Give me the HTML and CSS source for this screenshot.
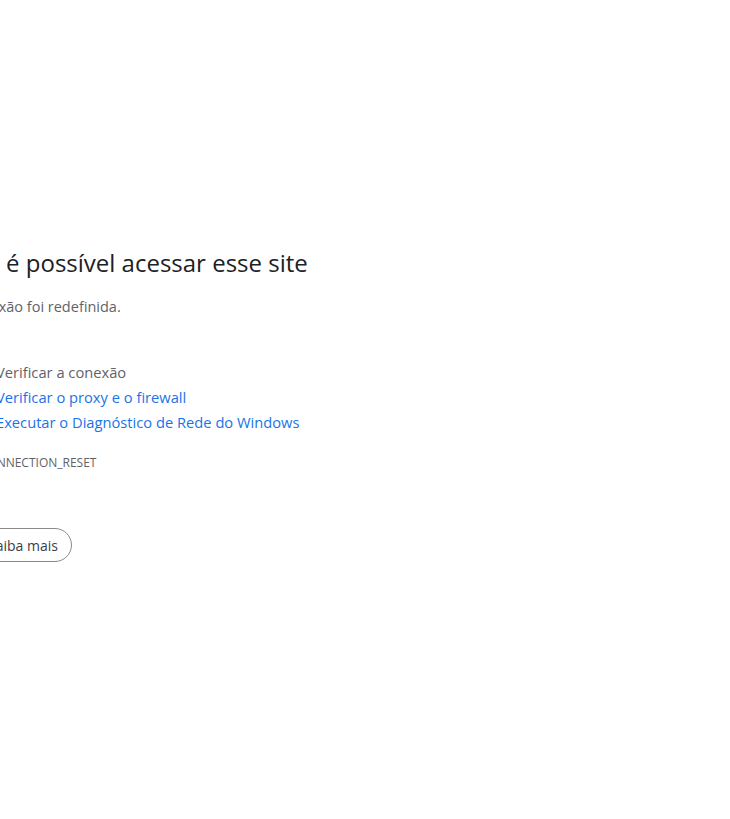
FILE: index.html
```html
<!DOCTYPE html>
<html lang="pt-BR">
<head>
<meta charset="utf-8">
<title>Não é possível acessar esse site</title>
<link rel="stylesheet" href="styles.css">
</head>
<body>
<div class="page">
  <main class="content">
    <h1 class="title">Não é possível acessar esse site</h1>
    <p class="summary">A conexão foi redefinida.</p>
    <p class="try">Tente:</p>
    <ul class="suggestions">
      <li>Verificar a conexão</li>
      <li><a href="#">Verificar o proxy e o firewall</a></li>
      <li><a href="#">Executar o Diagnóstico de Rede do Windows</a></li>
    </ul>
    <div class="error-code">ERR_CONNECTION_RESET</div>
    <div class="actions">
      <button class="details-btn" type="button">Saiba mais</button>
    </div>
  </main>
</div>
</body>
</html>
```
FILE: styles.css
```css
html, body {
  margin: 0;
  padding: 0;
  background: #ffffff;
}
body {
  font-family: "Open Sans", "Noto Sans", sans-serif;
  color: #5f6368;
  font-size: 15px;
  overflow: hidden;
}
.page {
  padding-top: 244px;
}
.content {
  margin-left: -47px;
}
.title {
  margin: 0 0 0 1px;
  font-size: 24px;
  font-weight: 500;
  line-height: 38px;
  color: #202124;
}
.summary {
  margin: 13px 0 0;
  font-size: 14.5px;
  line-height: 24px;
}
.try {
  margin: 10px 0 0;
  line-height: 24px;
  font-size: 14.5px;
}
.suggestions {
  margin: 7px 0 0;
  padding-left: 43px;
  font-size: 14.7px;
  line-height: 25px;
}
.suggestions a {
  color: #1a73e8;
  text-decoration: none;
}
.error-code {
  margin-top: 20px;
  font-size: 12px;
  line-height: 16px;
  color: #5f6368;
}
.actions {
  margin-top: 57px;
}
.details-btn {
  font-family: inherit;
  font-size: 14px;
  color: #3c4043;
  background: #fff;
  border: 1px solid #8a8a8a;
  border-radius: 17px;
  height: 34px;
  padding: 0 13px 0 34px;
}
```
